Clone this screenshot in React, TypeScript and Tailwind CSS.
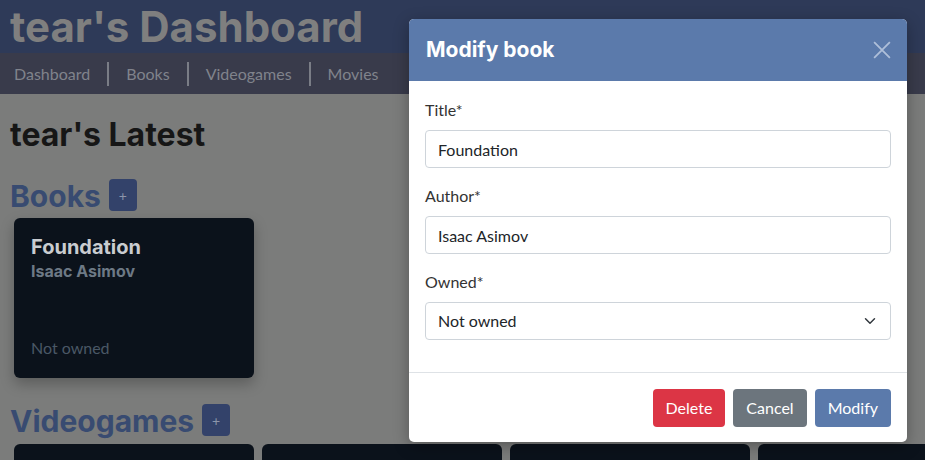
import React from 'react';

const headFont = "font-['Inter','Open_Sans',sans-serif]";
const bodyFont = "font-['Lato','Noto_Sans',sans-serif]";

function SectionHeading({ title }: { title: string }) {
  return (
    <div className="flex items-end gap-2">
      <h2 className={`${headFont} text-[30px] font-bold leading-none text-[#384b71]`}>{title}</h2>
      <button className="flex h-[32px] w-[28px] shrink-0 items-center justify-center rounded-[4px] bg-[#33426a] text-[14px] text-[#8c95aa]">
        +
      </button>
    </div>
  );
}

function Field({ label, children }: { label: string; children: React.ReactNode }) {
  return (
    <div className="mb-[16px]">
      <label className="mb-[8px] block text-[16px] leading-[24px] text-[#333]">{label}</label>
      {children}
    </div>
  );
}

export default function App() {
  return (
    <div className={`relative h-[460px] w-[925px] overflow-hidden bg-[#7b7c7b] ${bodyFont}`}>
      {/* Header */}
      <div className="flex h-[53px] items-center bg-[#2e3a58] px-[10px]">
        <h1 className={`${headFont} text-[42px] font-bold leading-[50px] text-[#7f7f7f]`}>
          tear's Dashboard
        </h1>
      </div>
      <nav className="flex h-[41px] items-center bg-[#393b4b] px-[14px] text-[16px] text-[#80838c]">
        <span>Dashboard</span>
        <span className="mx-[17px] h-[24px] w-[2px] bg-[#7a7d86]" />
        <span>Books</span>
        <span className="mx-[17px] h-[24px] w-[2px] bg-[#7a7d86]" />
        <span>Videogames</span>
        <span className="mx-[17px] h-[24px] w-[2px] bg-[#7a7d86]" />
        <span>Movies</span>
      </nav>

      {/* Content */}
      <div className="px-[10px] pt-[25px]">
        <h2 className={`${headFont} text-[32px] font-bold leading-none text-[#161616]`}>tear's Latest</h2>
        <div className="mt-[28px]">
          <SectionHeading title="Books" />
        </div>
        <div className="mt-[7px] flex gap-2 pl-[4px]">
          <div className="flex h-[160px] w-[240px] flex-col rounded-[6px] bg-[#0b121b] px-[17px] pb-[18px] pt-[16px] shadow-[0_6px_14px_rgba(0,0,0,0.25)]">
            <div className={`${headFont} text-[20px] font-bold leading-[26px] text-[#c9ccd0]`}>Foundation</div>
            <div className={`${headFont} mt-[1px] text-[16px] font-bold leading-[20px] text-[#6d7985]`}>Isaac Asimov</div>
            <div className="mt-auto text-[16px] text-[#4a5866]">Not owned</div>
          </div>
        </div>
        <div className="mt-[26px]">
          <SectionHeading title="Videogames" />
        </div>
        <div className="mt-[8px] flex gap-2 pl-[4px]">
          <div className="h-[160px] w-[240px] shrink-0 rounded-[6px] bg-[#0b121b]" />
          <div className="h-[160px] w-[240px] shrink-0 rounded-[6px] bg-[#0b121b]" />
          <div className="h-[160px] w-[240px] shrink-0 rounded-[6px] bg-[#0b121b]" />
          <div className="h-[160px] w-[240px] shrink-0 rounded-[6px] bg-[#0b121b]" />
        </div>
      </div>

      {/* Modal */}
      <div className="absolute left-[409px] top-[19px] w-[498px] overflow-hidden rounded-[5px] bg-white shadow-[0_4px_16px_rgba(0,0,0,0.3)]">
        <div className="flex h-[62px] items-center justify-between bg-[#5b7aab] pl-[17px] pr-[16px]">
          <h5 className={`${headFont} text-[21px] font-bold text-white`}>Modify book</h5>
          <svg width="18" height="18" viewBox="0 0 16 16" className="text-[#aebfd9]">
            <path d="M1 1L15 15M15 1L1 15" stroke="currentColor" strokeWidth="1.6" />
          </svg>
        </div>
        <div className="px-[16px] pb-[16px] pt-[17px]">
          <Field label="Title*">
            <input
              readOnly
              value="Foundation"
              className="h-[38px] w-full rounded-[4px] border border-[#ced4da] px-[12px] text-[16px] text-[#212529] outline-none"
            />
          </Field>
          <Field label="Author*">
            <input
              readOnly
              value="Isaac Asimov"
              className="h-[38px] w-full rounded-[4px] border border-[#ced4da] px-[12px] text-[16px] text-[#212529] outline-none"
            />
          </Field>
          <Field label="Owned*">
            <div className="flex h-[38px] w-full items-center justify-between rounded-[4px] border border-[#ced4da] pl-[12px] pr-[14px] text-[16px] text-[#212529]">
              <span>Not owned</span>
              <svg width="12" height="12" viewBox="0 0 16 16">
                <path d="M2 5l6 6 6-6" fill="none" stroke="#343a40" strokeWidth="2" strokeLinecap="round" strokeLinejoin="round" />
              </svg>
            </div>
          </Field>
        </div>
        <div className="flex justify-end gap-2 border-t border-[#dee2e6] px-[16px] pb-[15px] pt-[16px]">
          <button className="h-[38px] rounded-[4px] bg-[#dc3545] px-[13px] text-[16px] text-white">Delete</button>
          <button className="h-[38px] rounded-[4px] bg-[#6c757d] px-[13px] text-[16px] text-white">Cancel</button>
          <button className="h-[38px] rounded-[4px] bg-[#5b7aab] px-[13px] text-[16px] text-white">Modify</button>
        </div>
      </div>
    </div>
  );
}
